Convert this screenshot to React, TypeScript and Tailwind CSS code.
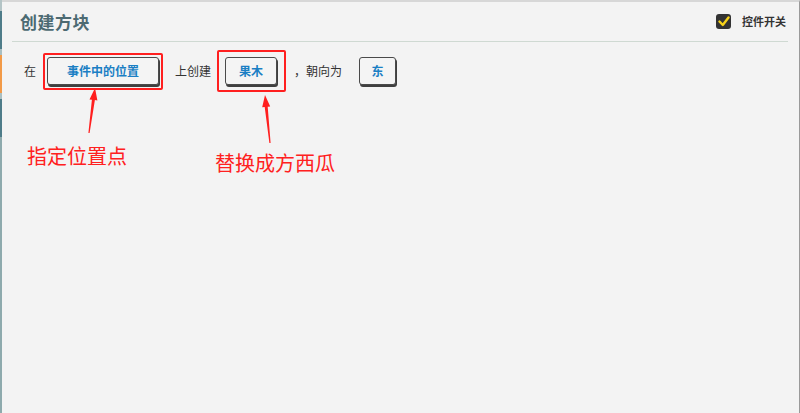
import React from "react";

const font = { fontFamily: '"Noto Sans CJK SC", "Noto Sans", sans-serif' };

function ValueButton({ label, width }: { label: string; width: string }) {
  return (
    <div
      className={`${width} h-[28px] flex items-center justify-center rounded-[3px] border border-[#4a4a4a] bg-[#f4f4f4] shadow-[1px_2px_0_#3f3f3f] text-[12px] font-bold text-[#1b7fc4] leading-none`}
    >
      {label}
    </div>
  );
}

export default function App() {
  return (
    <div className="relative w-[800px] h-[413px] flex bg-[#f3f3f3] overflow-hidden" style={font}>
      {/* left tab strip */}
      <div className="w-[2px] h-full flex flex-col">
        <div className="h-[11px] bg-[#b3c4c6]" />
        <div className="h-[38px] bg-[#4e7c89]" />
        <div className="h-[6px] bg-[#a9bfc2]" />
        <div className="h-[38px] bg-[#f29a48]" />
        <div className="h-[6px] bg-[#a9bfc2]" />
        <div className="h-[38px] bg-[#4e7c89]" />
        <div className="flex-1 bg-[#8eaaad]" />
      </div>

      {/* main panel */}
      <div className="flex-1 h-full flex flex-col border-t-2 border-t-[#d7d7d7] border-r border-r-[#9a9a9a]">
        <div className="h-[39px] flex items-center justify-between pl-[18px] pr-[13px]">
          <span className="text-[17px] font-bold text-[#4c6a72] tracking-[0.5px] leading-none">创建方块</span>
          <div className="flex items-center gap-[11px]">
            <div className="w-[15px] h-[15px] rounded-[3px] bg-[#333333] flex items-center justify-center">
              <svg width="12" height="11" viewBox="0 0 12 11">
                <path d="M1.5 5.5 L4.8 9 L10.5 1.5" fill="none" stroke="#f7d21a" strokeWidth="2.4" strokeLinecap="round" strokeLinejoin="round" />
              </svg>
            </div>
            <span className="text-[11px] font-bold text-[#333333] leading-none">控件开关</span>
          </div>
        </div>
        <div className="h-px bg-[#cfd9d2] ml-[10px] mr-[11px]" />

        <div className="mt-[8px] h-[42px] flex items-center pl-[22px] text-[12px] text-[#333333] leading-none">
          <span>在</span>
          <div className="ml-[7px] w-[120px] h-[37px] border-2 border-[#ff1f1f] rounded-[2px] flex items-center pl-[2px]">
            <ValueButton label="事件中的位置" width="w-[112px]" />
          </div>
          <span className="ml-[12px]">上创建</span>
          <div className="ml-[6px] w-[69px] h-[42px] border-2 border-[#ff1f1f] rounded-[2px] flex items-center pl-[6px]">
            <ValueButton label="果木" width="w-[52px]" />
          </div>
          <span className="ml-[8px]">，朝向为</span>
          <div className="ml-[17px]">
            <ValueButton label="东" width="w-[37px]" />
          </div>
        </div>
      </div>

      {/* annotations */}
      <svg className="absolute left-0 top-0 pointer-events-none" width="800" height="413" viewBox="0 0 800 413">
        <polygon fill="#ff1f1f" points="95,88 97.4,100.4 94.9,100.1 89.6,133.1 88.4,132.9 91.9,99.7 89.5,99.4" />
        <polygon fill="#ff1f1f" points="265,95 270.2,106.5 267.7,106.8 270.6,142.9 269.4,143.1 264.7,107.1 262.2,107.3" />
      </svg>
      <span className="absolute left-[27px] top-[146px] text-[20px] leading-[20px] text-[#ff2020]">指定位置点</span>
      <span className="absolute left-[215px] top-[153px] text-[20px] leading-[20px] text-[#ff2020]">替换成方西瓜</span>
    </div>
  );
}
